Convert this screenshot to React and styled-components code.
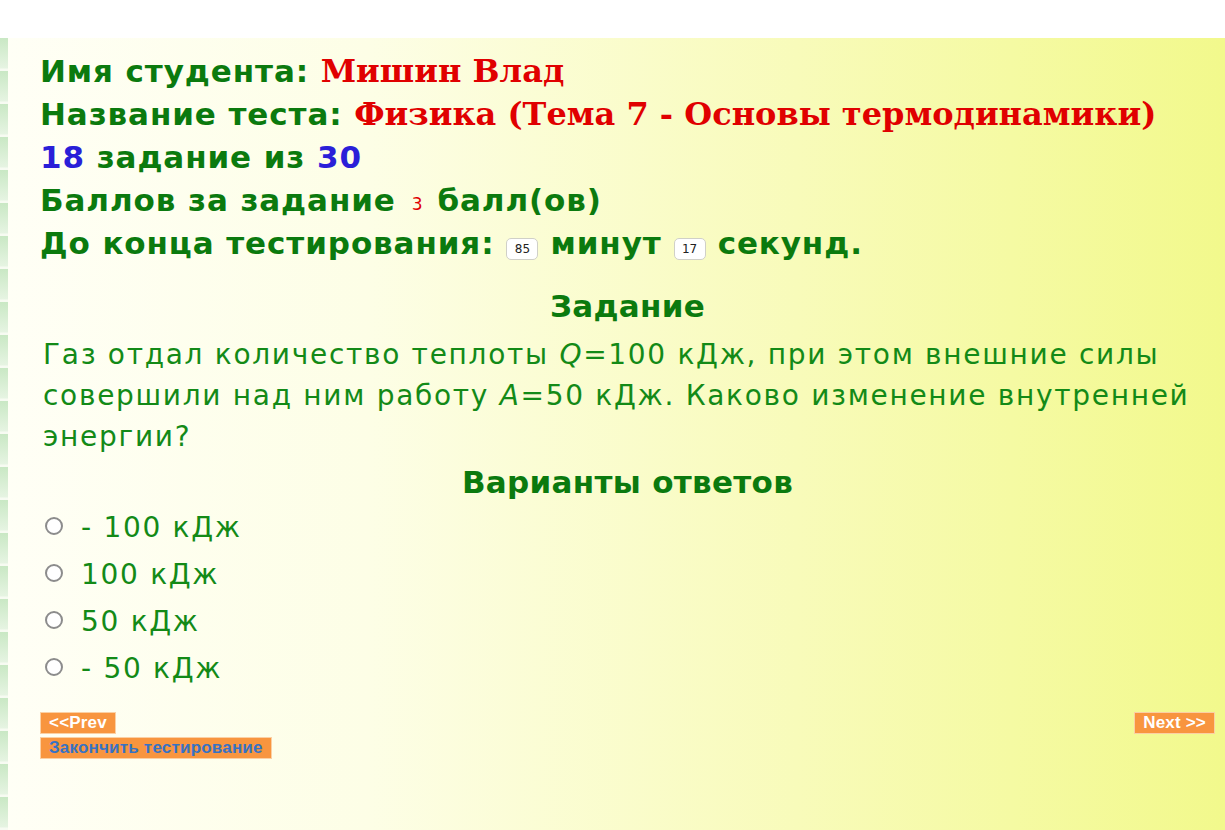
import React from "react";
import styled, { createGlobalStyle } from "styled-components";

const GlobalStyle = createGlobalStyle`
  html, body {
    margin: 0;
    padding: 0;
    background: #ffffff;
  }
  body {
    font-family: "DejaVu Sans", Verdana, sans-serif;
  }
`;

const TopBar = styled.div`
  height: 38px;
  background: #ffffff;
`;

const Main = styled.div`
  display: flex;
  min-height: 792px;
  background: linear-gradient(to right, #fffff6 0%, #fdfee6 30%, #f8fbba 65%, #f2f98c 100%);
`;

const Stripe = styled.div`
  width: 8px;
  flex: none;
  background: repeating-linear-gradient(
    to bottom,
    #c9e8c4 0px,
    #e6f4e2 30px,
    #f7fbf2 31px,
    #f7fbf2 33px
  );
`;

const Content = styled.div`
  flex: 1;
  padding: 12px 10px 40px 32px;
`;

const InfoLine = styled.div`
  height: 43px;
  font-weight: bold;
  font-size: 31px;
  letter-spacing: 0.9px;
  line-height: 43px;
  color: #0b7a0e;
  white-space: nowrap;
`;

const RedValue = styled.span`
  font-family: "DejaVu Serif", Georgia, serif;
  font-weight: bold;
  font-size: 32px;
  letter-spacing: 0;
  color: #e00000;
`;

const BlueNum = styled.span`
  color: #2a1fd8;
`;

const SmallRed = styled.span`
  font-weight: normal;
  font-size: 17px;
  color: #e00000;
  margin: 0 14px 0 16px;
  vertical-align: 1px;
`;

const TimerBox = styled.span`
  display: inline-block;
  width: 32px;
  height: 22px;
  line-height: 20px;
  text-align: center;
  box-sizing: border-box;
  border: 1px solid #d0d0c8;
  border-radius: 5px;
  background: #ffffff;
  font-weight: normal;
  font-size: 12px;
  letter-spacing: 0;
  color: #222222;
  margin: 0 12px 0 12px;
  vertical-align: 1px;
`;

const SectionTitle = styled.div`
  text-align: center;
  font-weight: bold;
  font-size: 31px;
  letter-spacing: 0.3px;
  line-height: 40px;
  color: #0b7a0e;
  margin-top: ${(p) => p.$top}px;
`;

const Question = styled.div`
  font-size: 28px;
  letter-spacing: 1.7px;
  line-height: 41px;
  color: #138a17;
  padding-left: 3px;
  margin-top: 8px;
`;

const Options = styled.div`
  display: flex;
  flex-direction: column;
  margin-top: 2px;
`;

const Option = styled.label`
  display: flex;
  align-items: center;
  gap: 18px;
  height: 47px;
  padding-left: 5px;
  font-size: 28px;
  letter-spacing: 1.7px;
  color: #138a17;
  cursor: pointer;
`;

const Radio = styled.span`
  width: 18px;
  height: 18px;
  box-sizing: border-box;
  border: 2px solid #8c8c8c;
  border-radius: 50%;
  background: #ffffff;
  flex: none;
  margin-top: -3px;
`;

const NavRow = styled.div`
  display: flex;
  justify-content: space-between;
  align-items: flex-start;
  margin-top: 20px;
`;

const OrangeButton = styled.button`
  display: block;
  height: 22px;
  padding: 0 8px;
  border: 1px solid #fbd0a4;
  background: #f8953f;
  font-family: "Liberation Sans", Arial, sans-serif;
  font-weight: bold;
  font-size: 17px;
  letter-spacing: 0.2px;
  color: ${(p) => p.$color || "#ffffff"};
  cursor: pointer;
  line-height: 20px;
`;

const FinishWrap = styled.div`
  margin-top: 3px;
`;

const options = ["- 100 кДж", "100 кДж", "50 кДж", "- 50 кДж"];

export default function App() {
  return (
    <>
      <GlobalStyle />
      <TopBar />
      <Main>
        <Stripe />
        <Content>
          <InfoLine>
            Имя студента: <RedValue>Мишин Влад</RedValue>
          </InfoLine>
          <InfoLine>
            Название теста: <RedValue>Физика (Тема 7 - Основы термодинамики)</RedValue>
          </InfoLine>
          <InfoLine>
            <BlueNum>18</BlueNum> задание из <BlueNum>30</BlueNum>
          </InfoLine>
          <InfoLine>
            Баллов за задание<SmallRed>3</SmallRed>балл(ов)
          </InfoLine>
          <InfoLine>
            До конца тестирования:<TimerBox>85</TimerBox>минут<TimerBox>17</TimerBox>секунд.
          </InfoLine>

          <SectionTitle $top={21}>Задание</SectionTitle>
          <Question>
            Газ отдал количество теплоты <i>Q</i>=100 кДж, при этом внешние силы совершили над ним
            работу <i>A</i>=50 кДж. Каково изменение внутренней энергии?
          </Question>

          <SectionTitle $top={5}>Варианты ответов</SectionTitle>
          <Options>
            {options.map((o) => (
              <Option key={o}>
                <Radio />
                {o}
              </Option>
            ))}
          </Options>

          <NavRow>
            <OrangeButton>&lt;&lt;Prev</OrangeButton>
            <OrangeButton>Next &gt;&gt;</OrangeButton>
          </NavRow>
          <FinishWrap>
            <OrangeButton $color="#3672c4">Закончить тестирование</OrangeButton>
          </FinishWrap>
        </Content>
      </Main>
    </>
  );
}
